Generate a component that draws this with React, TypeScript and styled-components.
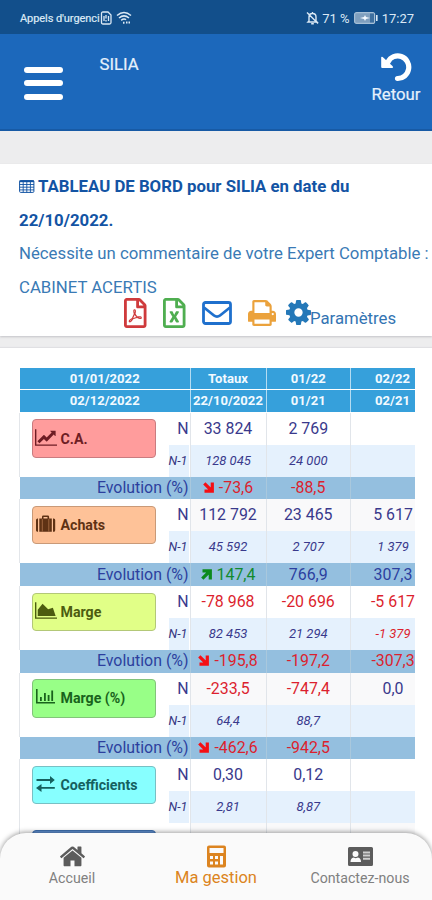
import React from 'react';
import styled, { createGlobalStyle, css } from 'styled-components';
import { FaRegFilePdf, FaRegFileExcel } from 'react-icons/fa';

const GlobalStyle = createGlobalStyle`
  * { box-sizing: border-box; }
  body { margin: 0; background: #fff; }
  #root { height: 900px; overflow: hidden; }
`;

const Screen = styled.div`
  position: relative;
  display: flex;
  flex-direction: column;
  width: 432px;
  height: 900px;
  overflow: hidden;
  background: #ededee;
  font-family: Roboto, 'Liberation Sans', sans-serif;
  font-size: 16.75px;
  color: #1d6aad;
`;

/* Status bar */
const StatusBar = styled.div`
  flex: none;
  display: flex;
  align-items: center;
  height: 34px;
  padding: 2px 18px 0 20px;
  background: #124f8b;
  color: #dbe9f5;
  font-size: 13px;
`;
const Carrier = styled.span`
  width: 80px;
  white-space: nowrap;
  font-size: 11px;
  letter-spacing: -0.08px;
  -webkit-text-stroke: 0.2px;
`;
const StatusSide = styled.div<{ $right?: boolean }>`
  display: flex;
  align-items: center;
  ${(p) => p.$right && css`margin-left: auto;`}
`;
const Percent = styled.span`margin: 0 4px 0 3px;`;
const Clock = styled.span`margin-left: 4px;`;
const WifiIcon = styled.svg`margin-left: 4px;`;

/* Header */
const Header = styled.header`
  flex: none;
  display: flex;
  justify-content: space-between;
  height: 96.5px;
  padding: 0 11.5px 0 24px;
  background: #1c68bb;
  border-bottom: 2px solid #175aa5;
  color: #e6f1fc;
`;
const Burger = styled.div`
  display: flex;
  flex-direction: column;
  gap: 7.5px;
  margin-top: 32.5px;
  width: 39px;
`;
const BurgerLine = styled.i`
  height: 6px;
  border-radius: 3px;
  background: #fff;
`;
const Company = styled.div`
  flex: 1;
  margin: 20px 0 0 36.5px;
  line-height: 20px;
  -webkit-text-stroke: 0.2px;
`;
const Back = styled.div`
  display: flex;
  flex-direction: column;
  align-items: center;
  margin-top: 18px;
  line-height: 20px;
  -webkit-text-stroke: 0.2px;
`;
const BackIcon = styled.svg`margin-bottom: 2px;`;

/* Title card */
const TitleCard = styled.section`
  flex: none;
  margin-top: 33.5px;
  height: 172px;
  padding: 6px 0 0 19px;
  background: #fff;
  box-shadow: 0 1px 2px #c4c4c8;
  line-height: 33.6px;
  white-space: nowrap;
`;
const Title = styled.h1`
  margin: 0;
  font-size: 16.8px;
  font-weight: 700;
  color: #1354a4;
`;
const TableIcon = styled.svg`
  margin-right: 3.5px;
  vertical-align: -1px;
`;
const Note = styled.div`
  color: #3a7ab5;
`;
const Actions = styled.div`
  display: flex;
  align-items: center;
  height: 30px;
  margin: -6.5px 0 0 105px;
  line-height: 20px;
`;
const Action = styled.span<{ $color: string; $gap: number }>`
  display: flex;
  color: ${(p) => p.$color};
  margin-right: ${(p) => p.$gap}px;
`;
const FileAction = styled(Action)`
  svg { width: 22.5px; height: 30px; }
`;
const Settings = styled.span`
  margin-top: 10px;
  color: #3374b3;
`;

/* Dashboard table */
const TableCard = styled.main`
  flex: 1;
  min-height: 0;
  overflow: hidden;
  margin-top: 12px;
  padding: 19.5px 17px 0 19px;
  background: #fff;
  box-shadow: 0 -1px 1px #e0e0e3;
`;
const HeadRow = styled.div`
  display: grid;
  grid-template-columns: 169.5px 76px 84.5px 65px;
  height: 21.5px;
  margin: 0 0 1.2px 1px;
`;
const HeadCell = styled.div<{ $last?: boolean }>`
  display: flex;
  align-items: center;
  justify-content: center;
  padding-left: ${(p) => (p.$last ? 19 : 0)}px;
  background: #36a0db;
  color: #f2faff;
  font-size: 13.1px;
  font-weight: 700;
  & + & { border-left: 1px solid #b4dcf2; }
`;
const Block = styled.div<{ $short?: boolean }>`
  display: grid;
  grid-template-columns: 170.5px 76px 84.5px 65px;
  grid-template-rows: 32px 32px ${(p) => (p.$short ? '' : '22.6px')};
`;
const LabelCell = styled.div`
  grid-row: span 2;
  display: flex;
  justify-content: space-between;
  padding: 6.5px 1px 0 12px;
  border-left: 1px solid #e3e6ea;
`;
const Badge = styled.div<{ $bg: string; $line: string; $ink: string }>`
  display: flex;
  align-items: center;
  width: 124px;
  height: 38.5px;
  padding-left: 1.5px;
  border: 1px solid ${(p) => p.$line};
  border-radius: 4px;
  background: ${(p) => p.$bg};
  color: ${(p) => p.$ink};
  font-size: 14.2px;
  font-weight: 700;
  svg { flex: none; margin: -3px 4px 0 0; }
`;
const Years = styled.div`
  display: flex;
  flex-direction: column;
  width: 20px;
  margin-top: -6.5px;
`;
const YearN = styled.span`
  height: 32px;
  line-height: 31.5px;
  font-size: 15.9px;
  text-align: right;
  color: #3b3b8e;
`;
const YearPrev = styled.span`
  height: 32px;
  line-height: 31px;
  background: #e5f1fd;
  font-size: 12.6px;
  font-style: italic;
  color: #34347f;
`;
type Kind = 'n' | 'prev' | 'evo';
const Cell = styled.div<{ $kind: Kind; $tone?: string; $last?: boolean; $shade?: boolean }>`
  display: flex;
  align-items: center;
  justify-content: center;
  padding-left: ${(p) => (p.$last ? 20 : 0)}px;
  padding-bottom: 1px;
  border-left: 1px solid ${(p) => (p.$kind === 'evo' ? '#a9c8dd' : '#e1e5ea')};
  background: ${(p) => (p.$kind === 'evo' ? '#94bfdf' : p.$kind === 'prev' ? '#e5f1fd' : p.$shade ? '#f9f9fa' : '#fff')};
  color: ${(p) => p.$tone || '#39398c'};
  font-size: ${(p) => (p.$kind === 'prev' ? 13 : 15.9)}px;
  font-style: ${(p) => (p.$kind === 'prev' ? 'italic' : 'normal')};
  white-space: nowrap;
  svg { margin-right: 5px; }
`;
const EvoLabel = styled.div`
  display: flex;
  align-items: center;
  justify-content: flex-end;
  margin-left: 1px;
  padding: 0 1px 1px 0;
  background: #94bfdf;
  color: #2c3f9e;
  font-size: 15.9px;
`;

/* Bottom navigation, floating over the table */
const BottomNav = styled.nav`
  position: absolute;
  left: 0;
  right: 0;
  bottom: 0;
  display: grid;
  grid-template-columns: 1fr 1fr 1fr;
  height: 67px;
  border-radius: 26px 26px 0 0;
  background: #fafafa;
  box-shadow: 0 -1px 5px rgba(0, 0, 0, 0.38);
`;
const NavItem = styled.div<{ $active?: boolean }>`
  display: flex;
  flex-direction: column;
  align-items: center;
  padding-top: 12px;
  color: ${(p) => (p.$active ? '#dc8420' : '#808080')};
  font-size: ${(p) => (p.$active ? 16.5 : 14.2)}px;
  line-height: 20px;
  svg { display: block; height: 23px; }
`;

const RED = '#dc1f2e';

const TrendArrow = ({ up }: { up?: boolean }) => (
  <svg width="11" height="11" viewBox="0 0 11 11" fill="none" stroke={up ? '#0c8a1d' : '#f50f14'} strokeWidth="3.2">
    {up ? <path d="M1.5 1.8H9.3V10.5M9 2L1.3 9.7" /> : <path d="M1.5 9.2H9.3V.5M9 9L1.3 1.3" />}
  </svg>
);

const LineIcon = () => (
  <svg width="22" height="17" viewBox="0 128 2048 1536" fill="currentColor">
    <path d="M2048 1536v128h-2048v-1536h128v1408h1920zm-128-1248v435q0 21-19.5 29.5t-35.5-7.5l-121-121-633 633q-10 10-23 10t-23-10l-233-233-416 416-192-192 585-585q10-10 23-10t23 10l233 233 464-464-121-121q-16-16-7.5-35.5t29.5-19.5h435q14 0 23 9t9 23z" />
  </svg>
);
const AreaIcon = () => (
  <svg width="22" height="17" viewBox="0 128 2048 1536" fill="currentColor">
    <path d="M2048 1536v128h-2048v-1536h128v1408h1920zm-384-900l256 772h-1664v-576l448-576 520 520z" />
  </svg>
);
const BarsIcon = () => (
  <svg width="22" height="17" viewBox="0 0 22 17" fill="currentColor">
    <path d="M1 1h1.6v13H20v1.5H1zM5 9h1.8v4H5zM9 5h1.8v8H9zM12.7 7h1.8v6h-1.8zM16.3 2.5h1.8V13h-1.8z" />
  </svg>
);
const CaseIcon = () => (
  <svg width="22" height="18" viewBox="0 0 22 18" fill="currentColor">
    <path d="M3 3.5v13.2h-.7Q1 16.7 1 15.3V5q0-1.5 1.5-1.5zM18 3.5h.7q1.5 0 1.5 1.5v10.2q0 1.5-1.4 1.500H18zM4.3 3.5H7V1.8Q7 .5 8.3.5h4.5q1.300 0 1.300 1.300v1.700h2.700v13.200H4.300zM8.500 2v1.500h4V2z" />
    <path d="M7.3 4v12.5M13.8 4v12.5" stroke="#c98a5c" strokeWidth=".6" />
  </svg>
);
const SwapIcon = () => (
  <svg width="22" height="18" viewBox="0 0 22 18" fill="currentColor">
    <path d="M1.5 4.1H15V1l4.800 4-4.800 4V5.900H1.500zM19.800 12H6.500V8.900L1 12.900l5.500 4v-3.100h13.300z" />
  </svg>
);

const blocks = [
  { name: 'C.A.', icon: <LineIcon />, bg: '#ff9c9c', line: '#c97c80', ink: '#6e1d24', n: ['33 824', '2 769', ''], prev: ['128 045', '24 000', ''], evo: ['-73,6', '-88,5', ''] },
  { name: 'Achats', icon: <CaseIcon />, bg: '#fec298', line: '#c99a78', ink: '#5f3214', n: ['112 792', '23 465', '5 617'], prev: ['45 592', '2 707', '1 379'], evo: ['147,4', '766,9', '307,3'] },
  { name: 'Marge', icon: <AreaIcon />, bg: '#e1ff87', line: '#b3c878', ink: '#4c5c10', n: ['-78 968', '-20 696', '-5 617'], prev: ['82 453', '21 294', '-1 379'], evo: ['-195,8', '-197,2', '-307,3'] },
  { name: 'Marge (%)', icon: <BarsIcon />, bg: '#98ff87', line: '#82c47a', ink: '#19631c', n: ['-233,5', '-747,4', '0,0'], prev: ['64,4', '88,7', ''], evo: ['-462,6', '-942,5', ''] },
  { name: 'Coefficients', icon: <SwapIcon />, bg: '#87ffff', line: '#78c0c4', ink: '#15605f', n: ['0,30', '0,12', ''], prev: ['2,81', '8,87', ''], evo: null },
];

const ValueCells = ({ kind, values, shade }: { kind: Kind; values: string[]; shade?: boolean }) => (
  <>
    {values.map((text, i) => {
      const negative = text.startsWith('-');
      const gain = kind === 'evo' && i === 0 && !negative;
      const tone = negative ? RED : gain ? '#128a2d' : kind === 'evo' ? '#2c3fa0' : undefined;
      return (
        <Cell key={i} $kind={kind} $last={i === 2} $shade={shade} $tone={tone}>
          {kind === 'evo' && i === 0 && <TrendArrow up={gain} />}
          {text}
        </Cell>
      );
    })}
  </>
);

export default function App() {
  return (
    <>
      <GlobalStyle />
      <Screen>
        <StatusBar>
          <StatusSide>
            <Carrier>Appels d'urgenci</Carrier>
            <svg width="12" height="14" viewBox="0 0 12 14" fill="none" stroke="currentColor" strokeWidth="1.3">
              <path d="M3 1h5l3 3v7.5Q11 13 9.5 13H3Q1.5 13 1.5 11.5v-9Q1.5 1 3 1z" />
              <path d="M6 4v3.5M6 9v1.5M4 5v5M8.500 5v5" />
            </svg>
            <WifiIcon width="16" height="14" viewBox="0 0 16 14" fill="none" stroke="currentColor" strokeWidth="1.5">
              <path d="M1 4.5Q8-1.5 15 4.5M3 7Q8 2.8 13 7M5.2 9.3Q8 7 10 8.8" />
              <path d="M7 11.8h1.5M10 11.5h1.5M12.5 11.5H14" strokeWidth="2" />
            </WifiIcon>
          </StatusSide>
          <StatusSide $right>
            <svg width="13" height="14" viewBox="0 0 13 14" fill="none" stroke="currentColor" strokeWidth="1.4">
              <path d="M3 10V6q0-3.500 3.500-3.500T10 6v4l1 1H2zM5.200 12.800h2.600M6.500 1v1.500M1 1.500l11 11" />
            </svg>
            <Percent>71 %</Percent>
            <svg width="24" height="12" viewBox="0 0 24 12">
              <rect x=".6" y=".6" width="20" height="10.8" rx="2" fill="#7f9fbe" stroke="#a5bfd6" strokeWidth="1.2" />
              <rect x="16" y="1.5" width="4" height="9" fill="#3d6f9f" />
              <path d="M6 6l4-1 1-2 1 2 4 1-4 1-1 2-1-2z" fill="#f3f9ff" />
              <path d="M22.8 3v6" stroke="#dbe9f5" strokeWidth="1.6" />
            </svg>
            <Clock>17:27</Clock>
          </StatusSide>
        </StatusBar>

        <Header>
          <Burger>
            <BurgerLine />
            <BurgerLine />
            <BurgerLine />
          </Burger>
          <Company>SILIA</Company>
          <Back>
            <BackIcon width="32" height="30" viewBox="0 0 32 30" fill="none">
              <path d="M8 10A11 11.3 0 1 1 17.5 26.500" stroke="#fff" strokeWidth="5.2" strokeLinecap="round" />
              <path d="M1.2 5.500q.3-1.400 1.500-.5l10 9.300q1.100 1.500-.5 1.700H2.200q-1 0-1-1z" fill="#fff" />
            </BackIcon>
            Retour
          </Back>
        </Header>

        <TitleCard>
          <Title>
            <TableIcon width="15.5" height="13" viewBox="0 0 15.5 13" fill="none" stroke="currentColor">
              <rect x=".6" y=".6" width="14.3" height="11.8" rx="1" />
              <path d="M.5 1.3h14.5" strokeWidth="1.8" />
              <path d="M.5 4.5h14.500M.5 7.200h14.500M.5 9.900h14.500M4.200 1v11.500M7.800 1v11.500M11.400 1v11.500" strokeWidth=".9" />
            </TableIcon>
            TABLEAU DE BORD pour SILIA en date du
            <br />
            22/10/2022.
          </Title>
          <Note>
            Nécessite un commentaire de votre Expert Comptable :<br />
            CABINET ACERTIS
          </Note>
          <Actions>
            <FileAction $color="#cf3a3c" $gap={16.5}>
              <FaRegFilePdf />
            </FileAction>
            <FileAction $color="#4fae50" $gap={16}>
              <FaRegFileExcel />
            </FileAction>
            <Action $color="#1f70cd" $gap={16.5}>
              <svg width="30" height="24" viewBox="0 0 30 24" fill="none" stroke="currentColor" strokeWidth="2.8">
                <rect x="1.5" y="1.5" width="27" height="21" rx="2" />
                <path d="M2 6.500l10 8q3 2.300 6 0l10-8" />
              </svg>
            </Action>
            <Action $color="#eba23c" $gap={9.5}>
              <svg width="28" height="26" viewBox="0 128 1664 1536" preserveAspectRatio="none" fill="currentColor">
                <path d="M384 1536h896v-256h-896v256zm0-640h896v-384h-160q-40 0-68-28t-28-68v-160h-640v640zm1152 64q0-26-19-45t-45-19-45 19-19 45 19 45 45 19 45-19 19-45zm128 0v416q0 13-9.500 22.500t-22.500 9.500h-224v160q0 40-28 68t-68 28h-960q-40 0-68-28t-28-68v-160h-224q-13 0-22.500-9.500t-9.500-22.500v-416q0-79 56.500-135.500t135.500-56.500h64v-544q0-40 28-68t68-28h672q40 0 88 20t76 48l152 152q28 28 48 76t20 88v256h64q79 0 135.500 56.500t56.500 135.500z" />
              </svg>
            </Action>
            <Action $color="#2478b8" $gap={-0.5}>
              <svg width="25" height="25" viewBox="0 128 1536 1536" fill="currentColor">
                <path d="M1024 896q0-106-75-181t-181-75-181 75-75 181 75 181 181 75 181-75 75-181zm512-109v222q0 12-8 23t-20 13l-185 28q-19 54-39 91 35 50 107 138 10 12 10 25t-9 23q-27 37-99 108t-94 71q-12 0-26-9l-138-108q-44 23-91 38-16 136-29 186-7 28-36 28h-222q-14 0-24.500-8.500t-11.500-21.500l-28-184q-49-16-90-37l-141 107q-10 9-25 9-14 0-25-11-126-114-165-168-7-10-7-23 0-12 8-23 15-21 51-66.500t54-70.500q-27-50-41-99l-183-27q-13-2-21-12.500t-8-23.500v-222q0-12 8-23t19-13l186-28q14-46 39-92-40-57-107-138-10-12-10-24 0-10 9-23 26-36 98.500-107.500t94.500-71.500q13 0 26 10l138 107q44-23 91-38 16-136 29-186 7-28 36-28h222q14 0 24.500 8.500t11.500 21.500l28 184q49 16 90 37l142-107q9-9 24-9 13 0 25 10 129 119 165 170 7 8 7 22 0 12-8 23-15 21-51 66.500t-54 70.500q26 50 41 98l183 28q13 2 21 12.500t8 23.500z" />
              </svg>
            </Action>
            <Settings>Paramètres</Settings>
          </Actions>
        </TitleCard>

        <TableCard>
          <HeadRow>
            <HeadCell>01/01/2022</HeadCell>
            <HeadCell>Totaux</HeadCell>
            <HeadCell>01/22</HeadCell>
            <HeadCell $last>02/22</HeadCell>
          </HeadRow>
          <HeadRow>
            <HeadCell>02/12/2022</HeadCell>
            <HeadCell>22/10/2022</HeadCell>
            <HeadCell>01/21</HeadCell>
            <HeadCell $last>02/21</HeadCell>
          </HeadRow>
          {blocks.map((b, i) => (
            <Block key={b.name} $short={!b.evo}>
              <LabelCell>
                <Badge $bg={b.bg} $line={b.line} $ink={b.ink}>
                  {b.icon}
                  {b.name}
                </Badge>
                <Years>
                  <YearN>N</YearN>
                  <YearPrev>N-1</YearPrev>
                </Years>
              </LabelCell>
              <ValueCells kind="n" values={b.n} shade={i % 2 === 1} />
              <ValueCells kind="prev" values={b.prev} />
              {b.evo && (
                <>
                  <EvoLabel>Evolution (%)</EvoLabel>
                  <ValueCells kind="evo" values={b.evo} />
                </>
              )}
            </Block>
          ))}
          <Block $short>
            <LabelCell>
              <Badge $bg="#5f8fd0" $line="#3f6fae" $ink="#173a6e" />
            </LabelCell>
            <ValueCells kind="n" values={['', '', '']} shade />
          </Block>
        </TableCard>

        <BottomNav>
          <NavItem>
            <svg width="25" viewBox="90 256 1612 1290" fill="#5c5c5c">
              <path d="M1472 992v480q0 26-19 45t-45 19h-384v-384h-256v384h-384q-26 0-45-19t-19-45v-480q0-1 .5-3t.5-3l575-474 575 474q1 2 1 6zm223-69l-62 74q-8 9-21 11h-3q-13 0-21-7l-692-577-692 577q-12 8-24 7-13-2-21-11l-62-74q-8-10-7-23.500t11-21.500l719-599q32-26 76-26t76 26l244 204v-195q0-14 9-23t23-9h192q14 0 23 9t9 23v408l219 182q10 8 11 21.500t-7 23.500z" />
            </svg>
            Accueil
          </NavItem>
          <NavItem $active>
            <svg width="19" height="22" viewBox="0 0 19 22" fill="#dc8420">
              <path fillRule="evenodd" d="M2 0h15q2 0 2 2v18q0 2-2 2H2q-2 0-2-2V2q0-2 2-2zM2.500 2.500v5h14v-5zM3 10.500v3h3v-3zM8 10.500v3h3v-3zM3 16v3h3v-3zM8 16v3h3v-3zM13 10.500v8.500h3v-8.500z" />
            </svg>
            Ma gestion
          </NavItem>
          <NavItem>
            <svg width="25" viewBox="0 0 25 19" fill="#5c5c5c">
              <path fillRule="evenodd" d="M1.500 0h22Q25 0 25 1.500v16q0 1.500-1.500 1.500h-22Q0 19 0 17.500v-16Q0 0 1.500 0zM7.500 4a3 3 0 1 0 0 6 3 3 0 0 0 0-6zM2.500 15H13q0-4-3-4.500l-2.300.8L5.500 10.500q-3 .5-3 4.500z" />
              <path d="M15 5.500h7M15 8.500h7M15 11.800h7" stroke="#cfcfcf" strokeWidth="1.900" />
            </svg>
            Contactez-nous
          </NavItem>
        </BottomNav>
      </Screen>
    </>
  );
}
